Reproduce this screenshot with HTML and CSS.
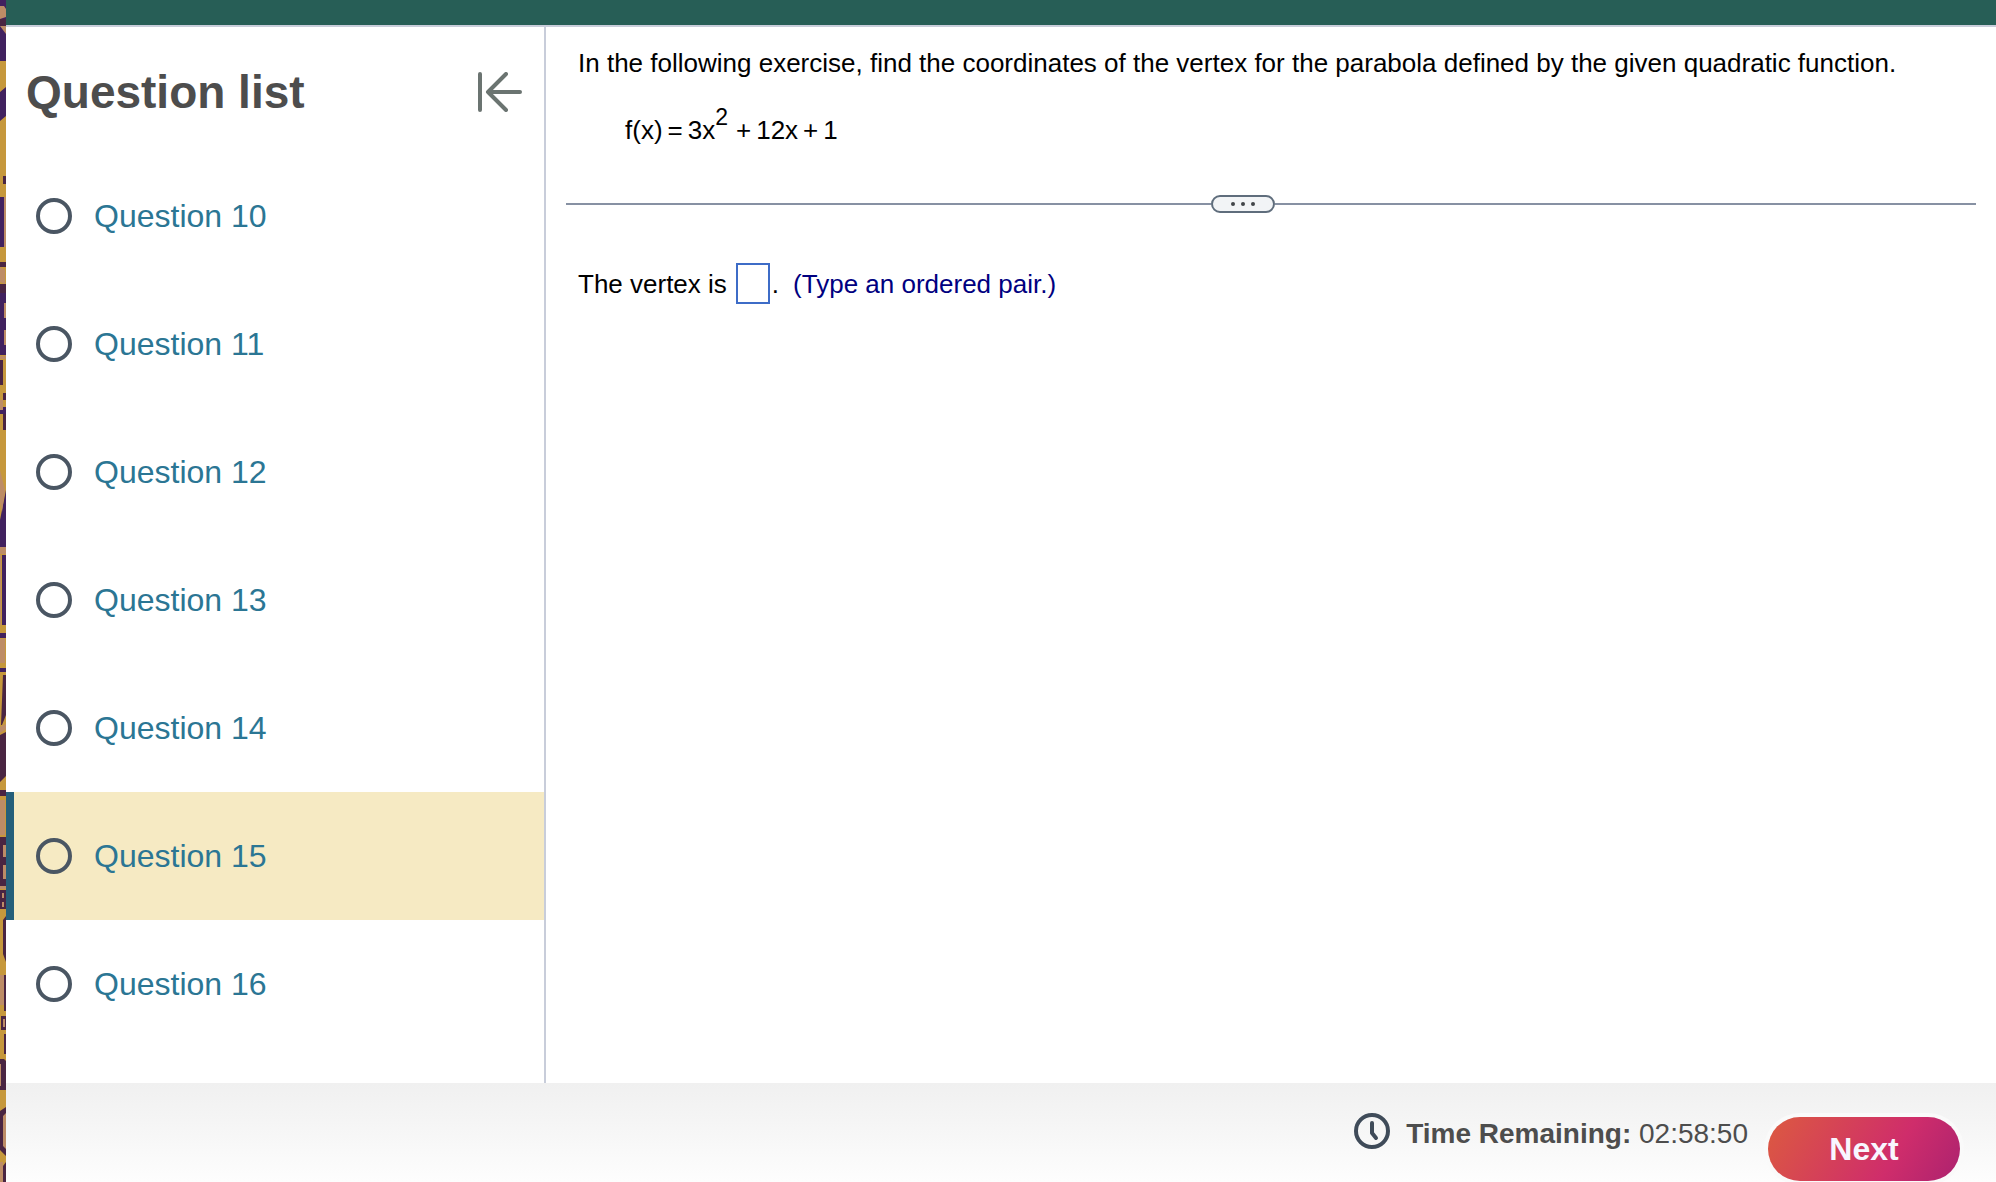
FILE: index.html
```html
<!DOCTYPE html>
<html lang="en">
<head>
<meta charset="utf-8">
<title>Question 15</title>
<link rel="stylesheet" href="styles.css">
</head>
<body>
<svg class="wallpaper" viewBox="0 0 6 1182" preserveAspectRatio="xMinYMin slice" aria-hidden="true">
  <rect width="6" height="1182" fill="#c6983c"/>
  <g fill="#41215f">
    <path d="M0 0h6v61H0zM0 92l6-5v29l-6 5zM0 197h4v50H0zM0 293h6v62H0zM0 407h6v7H0zM0 520l6-30v57H0zM2 555h4v70H2zM0 668h6v4H0zM0 633h6v5H0z"/>
  </g>
  <g fill="#4a2542">
    <path d="M0 19h6v7H0zM3 176h3v8H3zM0 262h6v5H0zM0 284h6v9H0zM0 360h3v25H0zM3 393h3v7H3zM3 414h3v16H3zM3 675h3v40l-4 10H1zM0 735l6-3v44l-6 6zM0 790h6v6H0zM0 837h6v49H0zM0 890h6v19H0zM3 920l3-4v46l-3-8zM4 975h2v36H4zM1 1016h5v14H1zM4 1034h2v20H4zM0 1059h4l2 2v29H0zM0 1111l6-4v49l-6-6zM3 1166l3-4v20H3z"/>
  </g>
  <g fill="#bd8c66">
    <path d="M0 6h4l2 3v8l-6 2zM0 26l6 8v-8zM4 197h2v50H4zM0 267l5 3v14l-5-2zM4 303h2v15H4zM4 330h2v15H4zM0 356h6v3H0zM0 400h3v10H0zM0 470l5 20-3 22-2-10zM0 547h6v7H0zM0 555h1v70H0zM0 639h5v24H0zM0 727l6-3v5l-6 4zM0 800h5v35H0zM3 845h3v12H3zM3 865h3v14H3zM0 886h6v3H0zM2 893h2v5H2zM2 902h2v5H2zM0 975h4v30H0zM3 1019h2v8H3zM0 1064h1v22H0zM3 1116l3-3v36l-3-3zM0 1162h3v20H0z"/>
  </g>
</svg>

<div class="app">
  <header class="topbar"></header>

  <div class="content">
    <aside class="sidebar">
      <div class="sidebar-head">
        <h1 class="sidebar-title">Question list</h1>
        <button class="collapse" type="button" aria-label="Collapse question list">
          <svg width="44" height="40" viewBox="0 0 44 40" fill="none" stroke="#6b7471" stroke-width="4" stroke-linecap="round" stroke-linejoin="round">
            <path d="M2 2v36M42 20H10M28 2L10 20l18 18"/>
          </svg>
        </button>
      </div>
      <nav class="questions">
        <a class="question" href="#q10"><svg class="status" viewBox="0 0 36 36"><circle cx="18" cy="18" r="16"/></svg>Question 10</a>
        <a class="question" href="#q11"><svg class="status" viewBox="0 0 36 36"><circle cx="18" cy="18" r="16"/></svg>Question 11</a>
        <a class="question" href="#q12"><svg class="status" viewBox="0 0 36 36"><circle cx="18" cy="18" r="16"/></svg>Question 12</a>
        <a class="question" href="#q13"><svg class="status" viewBox="0 0 36 36"><circle cx="18" cy="18" r="16"/></svg>Question 13</a>
        <a class="question" href="#q14"><svg class="status" viewBox="0 0 36 36"><circle cx="18" cy="18" r="16"/></svg>Question 14</a>
        <a class="question current" href="#q15" aria-current="true"><svg class="status" viewBox="0 0 36 36"><circle cx="18" cy="18" r="16"/></svg>Question 15</a>
        <a class="question" href="#q16"><svg class="status" viewBox="0 0 36 36"><circle cx="18" cy="18" r="16"/></svg>Question 16</a>
      </nav>
    </aside>

    <main class="exercise">
      <p class="prompt">In the following exercise, find the coordinates of the vertex for the parabola defined by the given quadratic function.</p>
      <p class="formula"><span>f(x)</span><span>=</span><span>3x<sup>2</sup></span><span class="after-power">+</span><span>12x</span><span>+</span><span>1</span></p>
      <div class="divider">
        <button class="handle" type="button" aria-label="Resize panes"><i></i><i></i><i></i></button>
      </div>
      <div class="answer">
        <label for="vertex">The vertex is</label>
        <input class="blank" id="vertex" type="text">
        <span>.</span>
        <span class="hint">(Type an ordered pair.)</span>
      </div>
    </main>
  </div>

  <footer class="footer">
    <svg class="clock" viewBox="0 0 36 36" fill="none" stroke="#3f4b59" stroke-linecap="round" stroke-linejoin="round" aria-hidden="true">
      <circle cx="18" cy="18" r="16" stroke-width="4"/>
      <path d="M18 10v10l4 5" stroke-width="4"/>
    </svg>
    <p class="timer"><strong>Time Remaining:</strong> <span>02:58:50</span></p>
    <button class="next" type="button">Next</button>
  </footer>
</div>
</body>
</html>
```
FILE: styles.css
```css
* {
  box-sizing: border-box;
}

body {
  margin: 0;
  display: flex;
  min-height: 100vh;
  background: #fff;
  color: #000;
  font-family: "Liberation Sans", Arial, Helvetica, sans-serif;
  font-size: 26px;
  line-height: 32px;
}

h1,
p {
  margin: 0;
}

button {
  padding: 0;
  border: 0;
  background: none;
  font: inherit;
  cursor: pointer;
}

.wallpaper {
  flex: none;
  width: 6px;
  height: 100vh;
}

.app {
  flex: 1;
  min-width: 0;
  display: flex;
  flex-direction: column;
}

.topbar {
  height: 27px;
  background: #275e56;
  border-bottom: 2px solid #c8cdda;
}

.content {
  flex: 1;
  display: flex;
}

/* Question list */

.sidebar {
  flex: none;
  width: 540px;
  border-right: 2px solid #c8cdda;
}

.sidebar-head {
  display: flex;
  align-items: center;
  justify-content: space-between;
  padding: 40px 22px 35px 20px;
}

.sidebar-title {
  color: #4d4d4d;
  font-size: 46px;
  line-height: 50px;
}

.collapse {
  display: flex;
}

.question {
  display: flex;
  align-items: center;
  gap: 22px;
  height: 128px;
  padding-left: 30px;
  color: #2b7694;
  font-size: 32px;
  text-decoration: none;
}

.current {
  padding-left: 22px;
  border-left: 8px solid #255f7a;
  background: #f6eac3;
}

.status {
  width: 36px;
  height: 36px;
  fill: none;
  stroke: #4a5663;
  stroke-width: 4;
}

/* Exercise */

.exercise {
  flex: 1;
  padding: 20px 20px 0;
}

.prompt {
  padding-left: 12px;
}

.formula {
  display: flex;
  gap: 5px;
  padding: 35px 0 0 59px;
}

.formula sup {
  position: relative;
  top: -14px;
  font-size: 23px;
  line-height: 0;
  vertical-align: baseline;
}

.after-power {
  padding-left: 3px;
}

.divider {
  display: flex;
  align-items: center;
  margin-top: 49px;
}

.divider::before,
.divider::after {
  content: "";
  flex: 1;
  height: 2px;
  background: #8791a3;
}

/* The handle sits a little left of the middle */
.divider::after {
  flex-basis: 56px;
}

.handle {
  display: flex;
  align-items: center;
  justify-content: center;
  gap: 6px;
  width: 64px;
  height: 18px;
  border: 2px solid #5f6d7c;
  border-radius: 9px;
  background: #f2f4f6;
}

.handle i {
  width: 4px;
  height: 4px;
  border-radius: 50%;
  background: #424549;
}

.answer {
  display: flex;
  align-items: center;
  padding: 50px 0 0 12px;
}

.blank {
  width: 34px;
  height: 41px;
  margin: 0 2px 0 9px;
  padding: 0 4px;
  border: 2px solid #3d6cc7;
  background: #fff;
  font: inherit;
}

.hint {
  padding-left: 14px;
  color: #000080;
}

/* Footer */

.footer {
  display: flex;
  align-items: flex-start;
  justify-content: flex-end;
  padding: 30px 36px 1px;
  background: linear-gradient(#f0f0f0, #fdfdfd);
}

.clock {
  width: 36px;
  height: 36px;
}

.timer {
  padding: 5px 16px 0;
  color: #4d4d4d;
  font-size: 28px;
}

.next {
  width: 192px;
  height: 64px;
  margin-top: 4px;
  margin-left: 4px;
  border-radius: 32px;
  background: linear-gradient(120deg, #dc5a40, #cf2d6b 65%, #ac226f);
  box-shadow: 0 0 0 4px #fafafa;
  color: #f8f6ff;
  font-size: 32px;
  font-weight: bold;
}
```
